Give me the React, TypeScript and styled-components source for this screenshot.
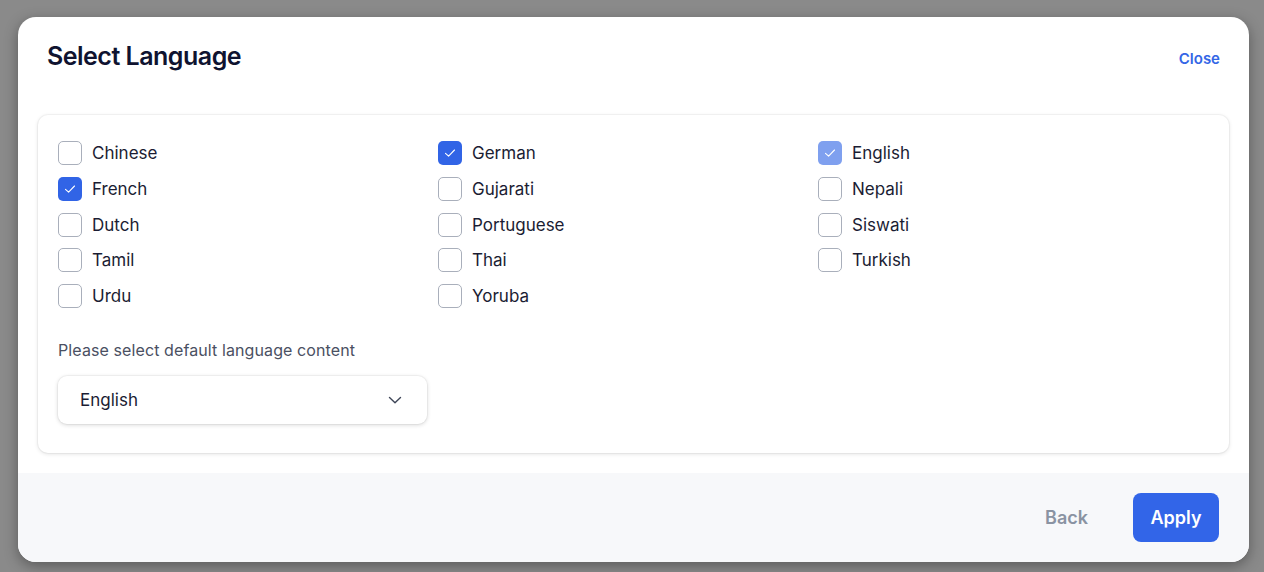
import React from "react";
import styled, { createGlobalStyle } from "styled-components";

const Global = createGlobalStyle`
  html, body { margin: 0; padding: 0; background: #8a8a8a; }
  body { font-family: Inter, "Noto Sans", Arial, sans-serif; -webkit-font-smoothing: antialiased; }
  * { box-sizing: border-box; }
`;

const Backdrop = styled.div`
  width: 1264px;
  height: 572px;
  padding: 17px 15px 10px 18px;
`;

const Modal = styled.div`
  height: 545px;
  background: #fff;
  border-radius: 18px;
  overflow: hidden;
  box-shadow: 0 4px 14px rgba(0, 0, 0, 0.35);
  display: flex;
  flex-direction: column;
`;

const Header = styled.div`
  height: 78px;
  padding: 0 29px;
  display: flex;
  align-items: center;
  justify-content: space-between;
`;

const Title = styled.h1`
  margin: 0;
  font-size: 25px;
  font-weight: 600;
  letter-spacing: -0.5px;
  color: #0f1330;
`;

const LinkButton = styled.button<{ $tone: "blue" | "gray"; $size: number }>`
  border: 0;
  background: none;
  padding: 0;
  font-family: inherit;
  font-weight: 600;
  font-size: ${(p) => p.$size}px;
  color: ${(p) => (p.$tone === "blue" ? "#3366e6" : "#8a93a2")};
  cursor: pointer;
`;

const CloseButton = styled(LinkButton)`
  margin-top: 5px;
`;

const Body = styled.div`
  flex: 1;
  padding: 20px 20px 20px;
`;

const Card = styled.div`
  background: #fff;
  border-radius: 10px;
  box-shadow: 0 0 0 1px rgba(0, 0, 0, 0.03), 0 1px 4px rgba(0, 0, 0, 0.12);
  padding: 26px 20px 29px;
`;

const Grid = styled.div`
  display: grid;
  grid-template-columns: 380px 380px 380px;
  row-gap: 11.75px;
`;

const Option = styled.label`
  display: flex;
  align-items: center;
  gap: 10px;
  height: 24px;
  font-size: 17px;
  color: #1b1d33;
  cursor: pointer;
`;

const Box = styled.span<{ $state: "off" | "on" | "dim" }>`
  width: 24px;
  height: 24px;
  border-radius: 5px;
  flex-shrink: 0;
  display: flex;
  align-items: center;
  justify-content: center;
  background: ${(p) => (p.$state === "on" ? "#3164e6" : p.$state === "dim" ? "#7fa0ef" : "#fff")};
  border: 1px solid ${(p) => (p.$state === "off" ? "#a9afbb" : "transparent")};
`;

const FieldLabel = styled.div`
  margin-top: 32px;
  font-size: 16px;
  letter-spacing: 0.1px;
  line-height: 20px;
  color: #4a5062;
`;

const Select = styled.div`
  margin-top: 16px;
  width: 369px;
  height: 48px;
  border-radius: 9px;
  background: #fff;
  box-shadow: 0 0 0 1px rgba(0, 0, 0, 0.03), 0 1px 4px rgba(0, 0, 0, 0.16);
  display: flex;
  align-items: center;
  justify-content: space-between;
  padding: 0 25px 0 22px;
  font-size: 17px;
  color: #1b1d33;
`;

const Footer = styled.div`
  height: 89px;
  background: #f7f8fa;
  display: flex;
  align-items: center;
  justify-content: flex-end;
  gap: 45px;
  padding: 0 30px 0 0;
`;

const Primary = styled.button`
  width: 86px;
  height: 49px;
  border: 0;
  border-radius: 8px;
  background: #3265e8;
  color: #fff;
  font-family: inherit;
  font-weight: 600;
  font-size: 18px;
  cursor: pointer;
`;

const Check = () => (
  <svg width="14" height="14" viewBox="0 0 14 14" fill="none">
    <path d="M2.5 7.3 L5.6 10.2 L11.5 4" stroke="#fff" strokeWidth="1.1" strokeLinecap="round" strokeLinejoin="round" />
  </svg>
);

const Chevron = () => (
  <svg width="14" height="14" viewBox="0 0 14 14" fill="none">
    <path d="M1.5 4.5 L7 9.8 L12.5 4.5" stroke="#3f4658" strokeWidth="1.4" strokeLinecap="round" strokeLinejoin="round" />
  </svg>
);

type State = "off" | "on" | "dim";
const rows: [string, State][][] = [
  [["Chinese", "off"], ["German", "on"], ["English", "dim"]],
  [["French", "on"], ["Gujarati", "off"], ["Nepali", "off"]],
  [["Dutch", "off"], ["Portuguese", "off"], ["Siswati", "off"]],
  [["Tamil", "off"], ["Thai", "off"], ["Turkish", "off"]],
  [["Urdu", "off"], ["Yoruba", "off"]],
];

export default function App() {
  return (
    <>
      <Global />
      <Backdrop>
        <Modal>
          <Header>
            <Title>Select Language</Title>
            <CloseButton $tone="blue" $size={15}>Close</CloseButton>
          </Header>
          <Body>
            <Card>
              <Grid>
                {rows.flat().map(([name, state]) => (
                  <Option key={name}>
                    <Box $state={state}>{state !== "off" && <Check />}</Box>
                    {name}
                  </Option>
                ))}
              </Grid>
              <FieldLabel>Please select default language content</FieldLabel>
              <Select>
                English
                <Chevron />
              </Select>
            </Card>
          </Body>
          <Footer>
            <LinkButton $tone="gray" $size={18}>Back</LinkButton>
            <Primary>Apply</Primary>
          </Footer>
        </Modal>
      </Backdrop>
    </>
  );
}
